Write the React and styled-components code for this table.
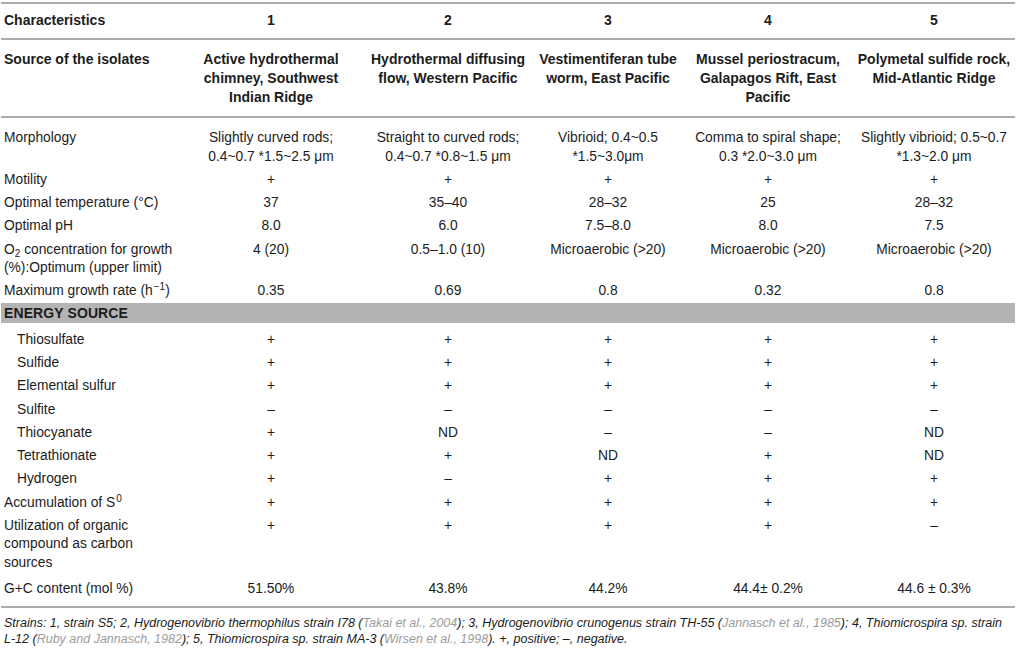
import React from 'react';
import styled, { createGlobalStyle } from 'styled-components';

const Global = createGlobalStyle`
  html, body { margin: 0; padding: 0; background: #fff; }
  body { font-family: "Liberation Sans", Arial, Helvetica, sans-serif; color: #1c1c1c; }
`;

const Page = styled.div`
  width: 1014px;
  padding: 2px 1px 0 1px;
`;

const Row = styled.div`
  display: grid;
  grid-template-columns: 178px 184px 170px 150px 170px 162px;
  align-items: start;
  font-size: ${p => (p.$bold ? '14px' : '13.8px')};
  font-weight: ${p => (p.$bold ? 700 : 400)};
  line-height: ${p => (p.$bold ? '19px' : '18.5px')};
  padding: ${p => p.$pad || '2.4px 0'};
  border-top: ${p => (p.$topRule ? '2px solid #ababab' : 'none')};
  border-bottom: ${p => (p.$bottomRule ? '2px solid #ababab' : 'none')};
`;

const Label = styled.div`
  padding-left: ${p => (p.$indent ? '16px' : '3px')};
  white-space: nowrap;
`;

const Value = styled.div`
  text-align: center;
  white-space: nowrap;
`;

const Band = styled.div`
  background: #b4b4b4;
  font-size: 14px;
  font-weight: 700;
  line-height: 20px;
  padding: 0 3px;
  margin-bottom: 5px;
  letter-spacing: 0.1px;
`;

const Sup = styled.sup`
  font-size: 10px;
  line-height: 0;
  vertical-align: 5px;
  margin-left: 1px;
`;

const Sub = styled.sub`
  font-size: 10px;
  line-height: 0;
  vertical-align: -3px;
`;

const Note = styled.p`
  margin: 7px 0 0 0;
  padding-left: 3px;
  font-size: 12.5px;
  font-style: italic;
  line-height: 16px;
  color: #1c1c1c;
`;

const Cite = styled.span`
  color: #9c9c9c;
`;

const Lines = ({ lines }) =>
  lines.map((l, i) => (
    <React.Fragment key={i}>
      {l}
      {i < lines.length - 1 && <br />}
    </React.Fragment>
  ));

const source = [
  ['Active hydrothermal', 'chimney, Southwest', 'Indian Ridge'],
  ['Hydrothermal diffusing', 'flow, Western Pacific'],
  ['Vestimentiferan tube', 'worm, East Pacific'],
  ['Mussel periostracum,', 'Galapagos Rift, East', 'Pacific'],
  ['Polymetal sulfide rock,', 'Mid-Atlantic Ridge'],
];

const general = [
  {
    label: ['Morphology'],
    values: [
      ['Slightly curved rods;', '0.4~0.7 *1.5~2.5 \u03bcm'],
      ['Straight to curved rods;', '0.4~0.7 *0.8~1.5 \u03bcm'],
      ['Vibrioid; 0.4~0.5', '*1.5~3.0\u03bcm'],
      ['Comma to spiral shape;', '0.3 *2.0~3.0 \u03bcm'],
      ['Slightly vibrioid; 0.5~0.7', '*1.3~2.0 \u03bcm'],
    ],
    pad: '11px 0 2.4px 0',
  },
  { label: ['Motility'], values: ['+', '+', '+', '+', '+'] },
  { label: ['Optimal temperature (\u00b0C)'], values: ['37', '35\u201340', '28\u201332', '25', '28\u201332'] },
  { label: ['Optimal pH'], values: ['8.0', '6.0', '7.5\u20138.0', '8.0', '7.5'] },
  {
    label: [
      <>O<Sub>2</Sub> concentration for growth</>,
      '(%):Optimum (upper limit)',
    ],
    values: ['4 (20)', '0.5\u20131.0 (10)', 'Microaerobic (>20)', 'Microaerobic (>20)', 'Microaerobic (>20)'],
  },
  {
    label: [<>Maximum growth rate (h<Sup>{'\u22121'}</Sup>)</>],
    values: ['0.35', '0.69', '0.8', '0.32', '0.8'],
  },
];

const energy = [
  ['Thiosulfate', ['+', '+', '+', '+', '+']],
  ['Sulfide', ['+', '+', '+', '+', '+']],
  ['Elemental sulfur', ['+', '+', '+', '+', '+']],
  ['Sulfite', ['\u2013', '\u2013', '\u2013', '\u2013', '\u2013']],
  ['Thiocyanate', ['+', 'ND', '\u2013', '\u2013', 'ND']],
  ['Tetrathionate', ['+', '+', 'ND', '+', 'ND']],
  ['Hydrogen', ['+', '\u2013', '+', '+', '+']],
];

const tail = [
  { label: [<>Accumulation of S<Sup>0</Sup></>], values: ['+', '+', '+', '+', '+'] },
  {
    label: ['Utilization of organic', 'compound as carbon', 'sources'],
    values: ['+', '+', '+', '+', '\u2013'],
  },
  {
    label: ['G+C content (mol %)'],
    values: ['51.50%', '43.8%', '44.2%', '44.4\u00b1 0.2%', '44.6 \u00b1 0.3%'],
    pad: '5px 0 8px 0',
    rule: true,
  },
];

const DataRow = ({ label, values, pad, rule, indent }) => (
  <Row $pad={pad} $bottomRule={rule}>
    <Label $indent={indent}>
      <Lines lines={label} />
    </Label>
    {values.map((v, i) => (
      <Value key={i}>{Array.isArray(v) ? <Lines lines={v} /> : v}</Value>
    ))}
  </Row>
);

export default function App() {
  return (
    <Page>
      <Global />
      <Row $bold $topRule $bottomRule $pad="7px 0 8px 0">
        <Label>Characteristics</Label>
        {['1', '2', '3', '4', '5'].map(n => (
          <Value key={n}>{n}</Value>
        ))}
      </Row>
      <Row $bold $bottomRule $pad="10px 0 9px 0">
        <Label>Source of the isolates</Label>
        {source.map((s, i) => (
          <Value key={i}>
            <Lines lines={s} />
          </Value>
        ))}
      </Row>
      {general.map((r, i) => (
        <DataRow key={i} {...r} />
      ))}
      <Band>ENERGY SOURCE</Band>
      {energy.map(([l, v]) => (
        <DataRow key={l} label={[l]} values={v} indent />
      ))}
      {tail.map((r, i) => (
        <DataRow key={i} {...r} />
      ))}
      <Note>
        Strains: 1, strain S5; 2, Hydrogenovibrio thermophilus strain I78 (<Cite>Takai et al., 2004</Cite>); 3,
        Hydrogenovibrio crunogenus strain TH-55 (<Cite>Jannasch et al., 1985</Cite>); 4, Thiomicrospira sp. strain
        <br />
        L-12 (<Cite>Ruby and Jannasch, 1982</Cite>); 5, Thiomicrospira sp. strain MA-3 (<Cite>Wirsen et al., 1998</Cite>).
        +, positive; –, negative.
      </Note>
    </Page>
  );
}
